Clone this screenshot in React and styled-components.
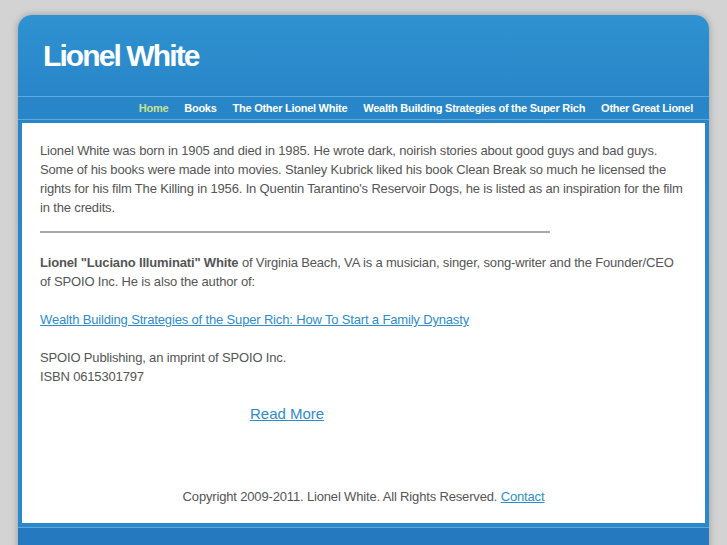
import React from 'react';
import styled, { createGlobalStyle } from 'styled-components';

const GlobalStyle = createGlobalStyle`
  html, body {
    margin: 0;
    padding: 0;
    background: #d3d3d3;
    font-family: "Liberation Sans", Arial, sans-serif;
  }
`;

const Page = styled.div`
  padding: 15px 0 0 18px;
  height: 530px;
  overflow: hidden;
`;

const Wrapper = styled.div`
  width: 691px;
  background: linear-gradient(#2f92d1, #2886c8 80px, #2a89ca);
  border-radius: 14px 14px 0 0;
  box-shadow: 0 0 7px rgba(0, 0, 0, 0.28);
`;

const Header = styled.div`
  height: 81px;
  padding-left: 25px;
  box-sizing: border-box;
  display: flex;
  align-items: center;
`;

const Title = styled.h1`
  margin: 0;
  color: #fff;
  font-size: 30px;
  font-weight: bold;
  letter-spacing: -1.9px;
  padding-top: 1px;
`;

const Nav = styled.nav`
  height: 22px;
  border-top: 1px solid #5aa9e0;
  border-bottom: 1px solid #5aa9e0;
  display: flex;
  justify-content: flex-end;
  align-items: center;
  padding-right: 8px;
`;

const NavItem = styled.a`
  color: ${(p) => (p.$active ? '#c8e291' : '#fff')};
  font-size: 11px;
  font-weight: bold;
  padding: 0 8px;
  text-decoration: none;
  letter-spacing: -0.26px;
  margin-top: -1px;
`;

const Content = styled.div`
  background: #fff;
  margin: 3px 4px 0;
  padding: 18px 18px 17px;
  color: #555;
  font-size: 13px;
  line-height: 19px;
  letter-spacing: -0.16px;
`;

const Para = styled.p`
  margin: 0 0 ${(p) => (p.$gap === undefined ? 19 : p.$gap)}px;
`;

const Rule = styled.hr`
  width: 510px;
  margin: 14px 0 20px;
  border: 0;
  border-top: 2px solid #a8a8a8;
  height: 0;
`;

const Link = styled.a`
  color: #2f8ccc;
  text-decoration: underline;
`;

const ReadMore = styled.div`
  padding-left: 210px;
  font-size: 15px;
  line-height: 19px;
  margin-bottom: 64px;
  letter-spacing: 0;
`;

const Footer = styled.div`
  text-align: center;
`;

const Bottom = styled.div`
  height: 30px;
  margin-top: 4px;
  border-top: 1px solid #5aa9e0;
  background: #2479bf;
`;

export default function App() {
  return (
    <>
      <GlobalStyle />
      <Page>
        <Wrapper>
          <Header>
            <Title>Lionel White</Title>
          </Header>
          <Nav>
            <NavItem $active>Home</NavItem>
            <NavItem>Books</NavItem>
            <NavItem>The Other Lionel White</NavItem>
            <NavItem>Wealth Building Strategies of the Super Rich</NavItem>
            <NavItem>Other Great Lionel</NavItem>
          </Nav>
          <Content>
            <Para $gap={0}>
              Lionel White was born in 1905 and died in 1985. He wrote dark, noirish stories about
              good guys and bad guys. Some of his books were made into movies. Stanley Kubrick liked
              his book Clean Break so much he licensed the rights for his film The Killing in 1956.
              In Quentin Tarantino's Reservoir Dogs, he is listed as an inspiration for the film in
              the credits.
            </Para>
            <Rule />
            <Para>
              <b>Lionel "Luciano Illuminati" White</b> of Virginia Beach, VA is a musician, singer,
              song-writer and the Founder/CEO of SPOIO Inc. He is also the author of:
            </Para>
            <Para>
              <Link href="#">Wealth Building Strategies of the Super Rich: How To Start a Family Dynasty</Link>
            </Para>
            <Para $gap={18}>
              SPOIO Publishing, an imprint of SPOIO Inc.
              <br />
              ISBN 0615301797
            </Para>
            <ReadMore>
              <Link href="#">Read More</Link>
            </ReadMore>
            <Footer>
              Copyright 2009-2011. Lionel White. All Rights Reserved. <Link href="#">Contact</Link>
            </Footer>
          </Content>
          <Bottom />
        </Wrapper>
      </Page>
    </>
  );
}
